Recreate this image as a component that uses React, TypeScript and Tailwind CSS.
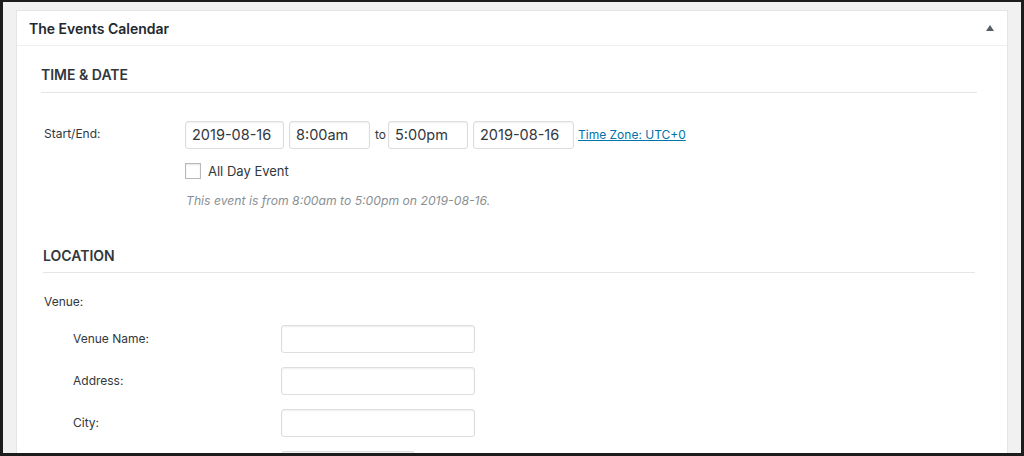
import React from "react";

const font = { fontFamily: "Inter, 'Noto Sans', sans-serif" };

function Field({ value, w }: { value?: string; w: string }) {
  return (
    <div
      className={`${w} h-[28px] box-border border border-[#ddd] rounded-[3px] bg-white px-[6px] flex items-center text-[14.5px] text-[#32373c] shadow-[inset_0_1px_2px_rgba(0,0,0,0.07)]`}
    >
      {value}
    </div>
  );
}

export default function App() {
  return (
    <div
      style={font}
      className="w-[1024px] h-[456px] box-border overflow-hidden bg-[#f1f1f1] border-l-[3px] border-r-[3px] border-t-2 border-b-[3px] border-[#1c1c1c] pt-2 px-[13px]"
    >
      <div className="bg-white border border-[#e5e5e5] h-[460px] shadow-[0_1px_1px_rgba(0,0,0,0.04)]">
        {/* header */}
        <div className="h-[35px] box-border border-b border-[#eee] flex items-center justify-between pl-3 pr-[12px]">
          <span className="text-[14px] font-semibold text-[#23282d]">The Events Calendar</span>
          <svg width="8" height="6" viewBox="0 0 8 6" className="mr-[1px] mb-[1px]">
            <polygon points="4,0 8,6 0,6" fill="#555d66" />
          </svg>
        </div>

        {/* time & date */}
        <div className="pl-6 pr-[30px]">
          <div className="mt-[19px] pb-[7px] border-b border-[#e5e5e5] text-[14px] leading-[20px] font-semibold text-[#32373c]">
            TIME &amp; DATE
          </div>
          <div className="mt-[28px] flex items-start pl-[3px]">
            <div className="w-[141px] pt-[4px] text-[12px] leading-[18px] text-[#32373c]">Start/End:</div>
            <div className="flex flex-col">
              <div className="flex items-center">
                <Field value="2019-08-16" w="w-[99px]" />
                <div className="w-[5px]" />
                <Field value="8:00am" w="w-[81px]" />
                <span className="ml-[5px] mr-[2px] text-[12px] text-[#32373c]">to</span>
                <Field value="5:00pm" w="w-[80px]" />
                <div className="w-[5px]" />
                <Field value="2019-08-16" w="w-[101px]" />
                <a className="ml-[4px] text-[12px] text-[#0073aa] underline">Time Zone: UTC+0</a>
              </div>
              <div className="mt-[13px] flex items-center">
                <div className="w-[16px] h-[16px] box-border border border-[#b4b9be] bg-white shadow-[inset_0_1px_2px_rgba(0,0,0,0.1)]" />
                <span className="ml-[7px] text-[13px] leading-[18px] text-[#32373c]">All Day Event</span>
              </div>
              <div className="mt-[12px] pl-[1px] text-[12.2px] leading-[18px] italic text-[#8a8f94]">
                This event is from 8:00am to 5:00pm on 2019-08-16.
              </div>
            </div>
          </div>
        </div>

        {/* location */}
        <div className="pl-[26px] pr-[32px]">
          <div className="mt-[36px] pb-[6px] border-b border-[#e5e5e5] text-[14px] leading-[20px] font-semibold text-[#32373c]">
            LOCATION
          </div>
          <div className="mt-[20px] pl-[1px] text-[12px] leading-[18px] text-[#32373c]">Venue:</div>
          <div className="mt-[14px] flex flex-col gap-[14px] pl-[30px]">
            {[
              ["Venue Name:", "w-[194px]"],
              ["Address:", "w-[194px]"],
              ["City:", "w-[194px]"],
              ["", "w-[134px]"],
            ].map(([label, w], i) => (
              <div key={i} className="flex items-center">
                <div className="w-[208px] text-[12px] leading-[18px] text-[#32373c]">{label}</div>
                <Field w={w} />
              </div>
            ))}
          </div>
        </div>
      </div>
    </div>
  );
}
